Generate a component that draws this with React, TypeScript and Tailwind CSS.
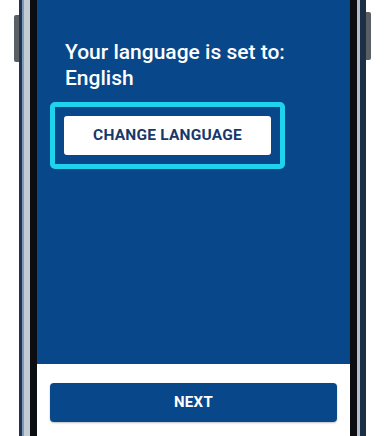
export default function App() {
  return (
    <div className="w-[384px] h-[436px] bg-white flex overflow-hidden" style={{ fontFamily: 'Roboto, "Liberation Sans", sans-serif' }}>
      {/* left side button */}
      <div className="w-[14px] shrink-0" />
      <div className="w-[5px] shrink-0 pt-[15px]">
        <div className="h-[47px] bg-[#5a5f66] rounded-l-[2px]" />
      </div>

      {/* left frame */}
      <div className="w-[3px] bg-[#1d3550] shrink-0" />
      <div className="w-[2px] bg-[#7f9ab5] shrink-0" />
      <div className="w-[6px] bg-[#c4ccd3] shrink-0" />
      <div className="w-[7px] bg-[#0c0d10] shrink-0" />

      {/* screen */}
      <div className="w-[313px] shrink-0 flex flex-col">
        <div className="h-[364px] bg-[#07478a] flex flex-col pl-[28px] pt-[39px]">
          <p className="text-white text-[21px] leading-[26px] font-medium">
            Your language is set to:
            <br />
            English
          </p>
          <div className="mt-[11px] ml-[-15px] w-[235px] h-[67px] border-[5px] border-[#1fd2f0] rounded-[5px] p-[9px]">
            <button className="w-full h-full bg-white rounded-[3px] text-[#17386a] text-[15.5px] font-bold tracking-[0.2px]">
              CHANGE LANGUAGE
            </button>
          </div>
        </div>
        <div className="flex-1 bg-white pt-[19px] pl-[13px]">
          <button className="w-[287px] h-[39px] bg-[#07478a] rounded-[4px] text-white text-[15px] font-bold tracking-[0.3px] shadow-[0_1px_2px_rgba(0,0,0,0.25)]">
            NEXT
          </button>
        </div>
      </div>

      {/* right frame */}
      <div className="w-[7px] bg-[#0c0d10] shrink-0" />
      <div className="w-[3px] bg-[#b5bec8] shrink-0" />
      <div className="w-[6px] bg-[#1b2f47] shrink-0" />

      {/* right side button */}
      <div className="w-[5px] shrink-0 pt-[12px]">
        <div className="h-[48px] bg-[#5a5f66] rounded-r-[2px]" />
      </div>
    </div>
  );
}
